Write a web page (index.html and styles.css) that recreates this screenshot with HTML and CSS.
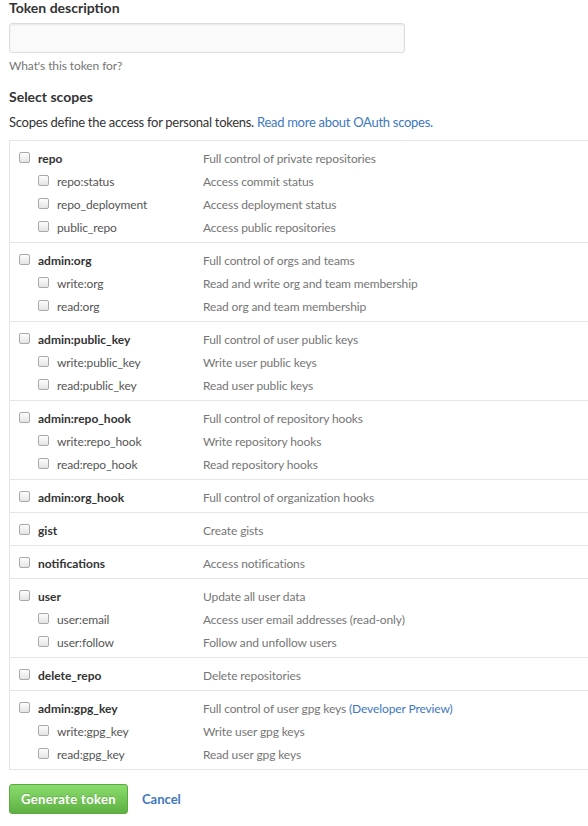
FILE: index.html
```html
<!DOCTYPE html>
<html lang="en">
<head>
<meta charset="utf-8">
<title>New personal access token</title>
<link rel="stylesheet" href="styles.css">
</head>
<body>
<div class="page">
  <h3 class="label">Token description</h3>
  <input class="input" type="text" aria-label="Token description">
  <p class="hint">What's this token for?</p>

  <h3 class="label scopes-title">Select scopes</h3>
  <p class="lead">Scopes define the access for personal tokens. <a href="#">Read more about OAuth scopes.</a></p>

  <div class="scopes">
    <div class="group">
      <div class="row"><div class="name top"><span class="cb"></span><b>repo</b></div><div class="desc">Full control of private repositories</div></div>
      <div class="row"><div class="name sub"><span class="cb"></span>repo:status</div><div class="desc">Access commit status</div></div>
      <div class="row"><div class="name sub"><span class="cb"></span>repo_deployment</div><div class="desc">Access deployment status</div></div>
      <div class="row"><div class="name sub"><span class="cb"></span>public_repo</div><div class="desc">Access public repositories</div></div>
    </div>
    <div class="group">
      <div class="row"><div class="name top"><span class="cb"></span><b>admin:org</b></div><div class="desc">Full control of orgs and teams</div></div>
      <div class="row"><div class="name sub"><span class="cb"></span>write:org</div><div class="desc">Read and write org and team membership</div></div>
      <div class="row"><div class="name sub"><span class="cb"></span>read:org</div><div class="desc">Read org and team membership</div></div>
    </div>
    <div class="group">
      <div class="row"><div class="name top"><span class="cb"></span><b>admin:public_key</b></div><div class="desc">Full control of user public keys</div></div>
      <div class="row"><div class="name sub"><span class="cb"></span>write:public_key</div><div class="desc">Write user public keys</div></div>
      <div class="row"><div class="name sub"><span class="cb"></span>read:public_key</div><div class="desc">Read user public keys</div></div>
    </div>
    <div class="group">
      <div class="row"><div class="name top"><span class="cb"></span><b>admin:repo_hook</b></div><div class="desc">Full control of repository hooks</div></div>
      <div class="row"><div class="name sub"><span class="cb"></span>write:repo_hook</div><div class="desc">Write repository hooks</div></div>
      <div class="row"><div class="name sub"><span class="cb"></span>read:repo_hook</div><div class="desc">Read repository hooks</div></div>
    </div>
    <div class="group">
      <div class="row"><div class="name top"><span class="cb"></span><b>admin:org_hook</b></div><div class="desc">Full control of organization hooks</div></div>
    </div>
    <div class="group">
      <div class="row"><div class="name top"><span class="cb"></span><b>gist</b></div><div class="desc">Create gists</div></div>
    </div>
    <div class="group">
      <div class="row"><div class="name top"><span class="cb"></span><b>notifications</b></div><div class="desc">Access notifications</div></div>
    </div>
    <div class="group">
      <div class="row"><div class="name top"><span class="cb"></span><b>user</b></div><div class="desc">Update all user data</div></div>
      <div class="row"><div class="name sub"><span class="cb"></span>user:email</div><div class="desc">Access user email addresses (read-only)</div></div>
      <div class="row"><div class="name sub"><span class="cb"></span>user:follow</div><div class="desc">Follow and unfollow users</div></div>
    </div>
    <div class="group">
      <div class="row"><div class="name top"><span class="cb"></span><b>delete_repo</b></div><div class="desc">Delete repositories</div></div>
    </div>
    <div class="group">
      <div class="row"><div class="name top"><span class="cb"></span><b>admin:gpg_key</b></div><div class="desc">Full control of user gpg keys <a href="#">(Developer Preview)</a></div></div>
      <div class="row"><div class="name sub"><span class="cb"></span>write:gpg_key</div><div class="desc">Write user gpg keys</div></div>
      <div class="row"><div class="name sub"><span class="cb"></span>read:gpg_key</div><div class="desc">Read user gpg keys</div></div>
    </div>
  </div>

  <div class="actions">
    <button class="btn-primary" type="button">Generate token</button>
    <a class="cancel" href="#">Cancel</a>
  </div>
</div>
</body>
</html>
```

FILE: styles.css
```css
html, body {
  margin: 0;
  padding: 0;
  background: #fff;
  overflow: hidden;
}

body {
  font-family: Lato, "Open Sans", "Liberation Sans", sans-serif;
  font-size: 13px;
  color: #333;
}

.page {
  padding: 0 0 0 9px;
  overflow: hidden;
}

.label {
  margin: 0;
  font-size: 14px;
  font-weight: 700;
  line-height: 16px;
  color: #333;
}

.input {
  display: block;
  box-sizing: border-box;
  margin: 7px 0 0;
  width: 396px;
  height: 30px;
  border: 1px solid #ddd;
  border-radius: 3px;
  background: #fafafa;
  box-shadow: inset 0 1px 2px rgba(0, 0, 0, 0.075);
  font: inherit;
}

.hint {
  margin: 4px 0 0;
  font-size: 12px;
  letter-spacing: -0.1px;
  line-height: 18px;
  color: #767676;
}

.scopes-title {
  margin-top: 14px;
}

.lead {
  margin: 8px 0 0;
  line-height: 18px;
  letter-spacing: -0.28px;
  color: #333;
}

a {
  color: #4078c0;
  text-decoration: none;
}

.scopes {
  margin-top: 9px;
  width: 640px;
  border: 1px solid #e5e5e5;
  border-top: 0;
}

.group {
  border-top: 1px solid #e5e5e5;
  padding: 6px 0 3px;
}

.row {
  display: grid;
  grid-template-columns: 193px 1fr;
  height: 23px;
  line-height: 23px;
  font-size: 12px;
  letter-spacing: -0.12px;
}

.name {
  display: flex;
  align-items: center;
  color: #555;
}

.name b {
  color: #333;
  font-weight: 700;
  letter-spacing: 0;
}

.top {
  padding-left: 9px;
}

.sub {
  padding-left: 28px;
}

.cb {
  box-sizing: border-box;
  width: 11px;
  height: 11px;
  margin: -3px 8px 0 0;
  border: 1px solid #a9a9a9;
  border-radius: 2px;
  background: linear-gradient(#fdfdfd, #e4e4e4);
  flex: none;
}

.desc {
  color: #767676;
}

.actions {
  display: flex;
  align-items: center;
  margin-top: 14px;
}

.btn-primary {
  box-sizing: border-box;
  height: 30px;
  width: 119px;
  padding: 0;
  border: 1px solid #5ca941;
  border-radius: 3px;
  background: linear-gradient(#8add6d, #60b044);
  color: #fff;
  font: inherit;
  font-weight: 700;
  letter-spacing: 0.35px;
  text-shadow: 0 -1px 0 rgba(0, 0, 0, 0.15);
}

.cancel {
  margin-left: 14px;
  font-weight: 700;
}
```
